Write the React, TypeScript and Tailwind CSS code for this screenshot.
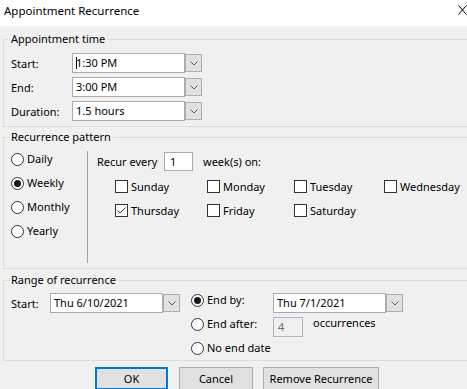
import React from "react";

function Chevron() {
  return (
    <svg width="8" height="5" viewBox="0 0 8 5" className="block">
      <polyline points="0.5,0.5 4,4 7.5,0.5" fill="none" stroke="#5f5f5f" strokeWidth="1" />
    </svg>
  );
}

function Combo({ value, caret = false }: { value: string; caret?: boolean }) {
  return (
    <div className="flex items-start">
      <div className="relative flex h-[20px] w-[113px] items-center border border-[#ababab] bg-white px-[3px]">
        {caret ? <span className="absolute left-[3px] top-[3px] h-[12px] w-[1px] bg-black" /> : null}
        <span>{value}</span>
      </div>
      <div className="mt-[1px] flex h-[18px] w-[17px] items-center justify-center border border-[#adadad] bg-[#e1e1e1]">
        <Chevron />
      </div>
    </div>
  );
}

function Radio({ checked = false }: { checked?: boolean }) {
  return (
    <span className="flex h-[13px] w-[13px] shrink-0 items-center justify-center rounded-full border border-[#333333] bg-white">
      {checked ? <span className="h-[7px] w-[7px] rounded-full bg-[#1a1a1a]" /> : null}
    </span>
  );
}

function Check({ label, checked = false }: { label: string; checked?: boolean }) {
  return (
    <div className="flex h-[13px] items-center gap-[3px]">
      <span className="flex h-[13px] w-[13px] shrink-0 items-center justify-center border border-[#333333] bg-white">
        {checked ? (
          <svg width="11" height="11" viewBox="0 0 11 11" className="block">
            <polyline points="1.5,5.5 4,8 9.5,2.5" fill="none" stroke="#333333" strokeWidth="1" />
          </svg>
        ) : null}
      </span>
      <span>{label}</span>
    </div>
  );
}

function TimeRow({ label, value, caret }: { label: string; value: string; caret?: boolean }) {
  return (
    <div className="flex h-[20px] items-center">
      <span className="w-[61px] shrink-0 pt-[2px]">{label}</span>
      <Combo value={value} caret={caret} />
    </div>
  );
}

function Group({ title, className, children }: { title: string; className?: string; children: React.ReactNode }) {
  return (
    <fieldset className={`ml-[3px] w-[466px] min-w-0 border border-[#dcdcdc] px-[7px] ${className ?? ""}`}>
      <legend className="-ml-[2px] px-[2px] leading-[16px]">{title}</legend>
      {children}
    </fieldset>
  );
}

export default function App() {
  return (
    <div className="h-[389px] w-[467px] overflow-hidden bg-[#f0f0f0] font-['Noto_Sans',sans-serif] text-[11px] leading-[16px] text-black">
      <div className="flex h-[26px] items-start bg-white pl-[4px] pt-[3px]">
        <span className="text-[11.5px]">Appointment Recurrence</span>
        <svg width="9" height="10" viewBox="0 0 9 10" className="ml-auto mt-[2px] block">
          <line x1="0.5" y1="0.5" x2="8.5" y2="9.5" stroke="#000" strokeWidth="1" />
          <line x1="8.5" y1="0.5" x2="0.5" y2="9.5" stroke="#000" strokeWidth="1" />
        </svg>
      </div>

      <Group title="Appointment time" className="mt-[5px] pb-[5px] pt-[6px]">
        <div className="flex flex-col gap-[4px]">
          <TimeRow label="Start:" value="1:30 PM" caret />
          <TimeRow label="End:" value="3:00 PM" />
          <TimeRow label="Duration:" value="1.5 hours" />
        </div>
      </Group>

      <Group title="Recurrence pattern" className="mt-[2px] pb-[5px]">
        <div className="flex items-start">
          <div className="flex w-[76px] shrink-0 flex-col pt-[2px]">
            {[
              ["Daily", false],
              ["Weekly", true],
              ["Monthly", false],
              ["Yearly", false],
            ].map(([name, on]) => (
              <div key={name as string} className="flex h-[24px] items-center gap-[3px]">
                <Radio checked={on as boolean} />
                <span>{name as string}</span>
              </div>
            ))}
          </div>
          <div className="mt-[6px] h-[112px] flex-1 border-l border-[#a0a0a0] pl-[9px] pt-[1px]">
            <div className="flex h-[19px] items-center">
              <span className="w-[67px] shrink-0">Recur every</span>
              <div className="flex h-[19px] w-[29px] items-center border border-[#ababab] bg-white px-[5px]">1</div>
              <span className="ml-[10px]">week(s) on:</span>
            </div>
            <div className="ml-[18px] mt-[9px] grid grid-cols-[92px_87px_90px_auto] gap-y-[11px]">
              <Check label="Sunday" />
              <Check label="Monday" />
              <Check label="Tuesday" />
              <Check label="Wednesday" />
              <Check label="Thursday" checked />
              <Check label="Friday" />
              <Check label="Saturday" />
            </div>
          </div>
        </div>
      </Group>

      <Group title="Range of recurrence" className="mt-[3px]">
        <div className="flex items-start">
          <div className="mt-[5px] flex h-[20px] items-center">
            <span className="w-[39px] shrink-0 pt-[2px]">Start:</span>
            <Combo value="Thu 6/10/2021" />
          </div>
          <div className="ml-[11px] flex flex-col">
            <div className="flex h-[24px] items-center">
              <Radio checked />
              <span className="ml-[3px] w-[66px] shrink-0">End by:</span>
              <div className="mt-[5px] self-start">
                <Combo value="Thu 7/1/2021" />
              </div>
            </div>
            <div className="flex h-[24px] items-center">
              <Radio />
              <span className="ml-[3px] w-[66px] shrink-0">End after:</span>
              <div className="mt-[5px] flex h-[20px] w-[30px] items-center self-start border border-[#aab9ca] bg-[#f0f0f0] px-[4px] text-[#6d6d6d]">
                4
              </div>
              <span className="ml-[10px] -mt-[2px]">occurrences</span>
            </div>
            <div className="flex h-[24px] items-center">
              <Radio />
              <span className="ml-[3px]">No end date</span>
            </div>
          </div>
        </div>
      </Group>

      <div className="mt-[6px] flex pl-[95px]">
        <button className="flex h-[23px] w-[73px] items-center justify-center border-2 border-[#0078d7] bg-[#e1e1e1]">OK</button>
        <button className="ml-[11px] flex h-[23px] w-[74px] items-center justify-center border border-[#adadad] bg-[#e1e1e1]">Cancel</button>
        <button className="ml-[10px] flex h-[23px] w-[116px] items-center justify-center border border-[#adadad] bg-[#e1e1e1]">
          Remove Recurrence
        </button>
      </div>
    </div>
  );
}
